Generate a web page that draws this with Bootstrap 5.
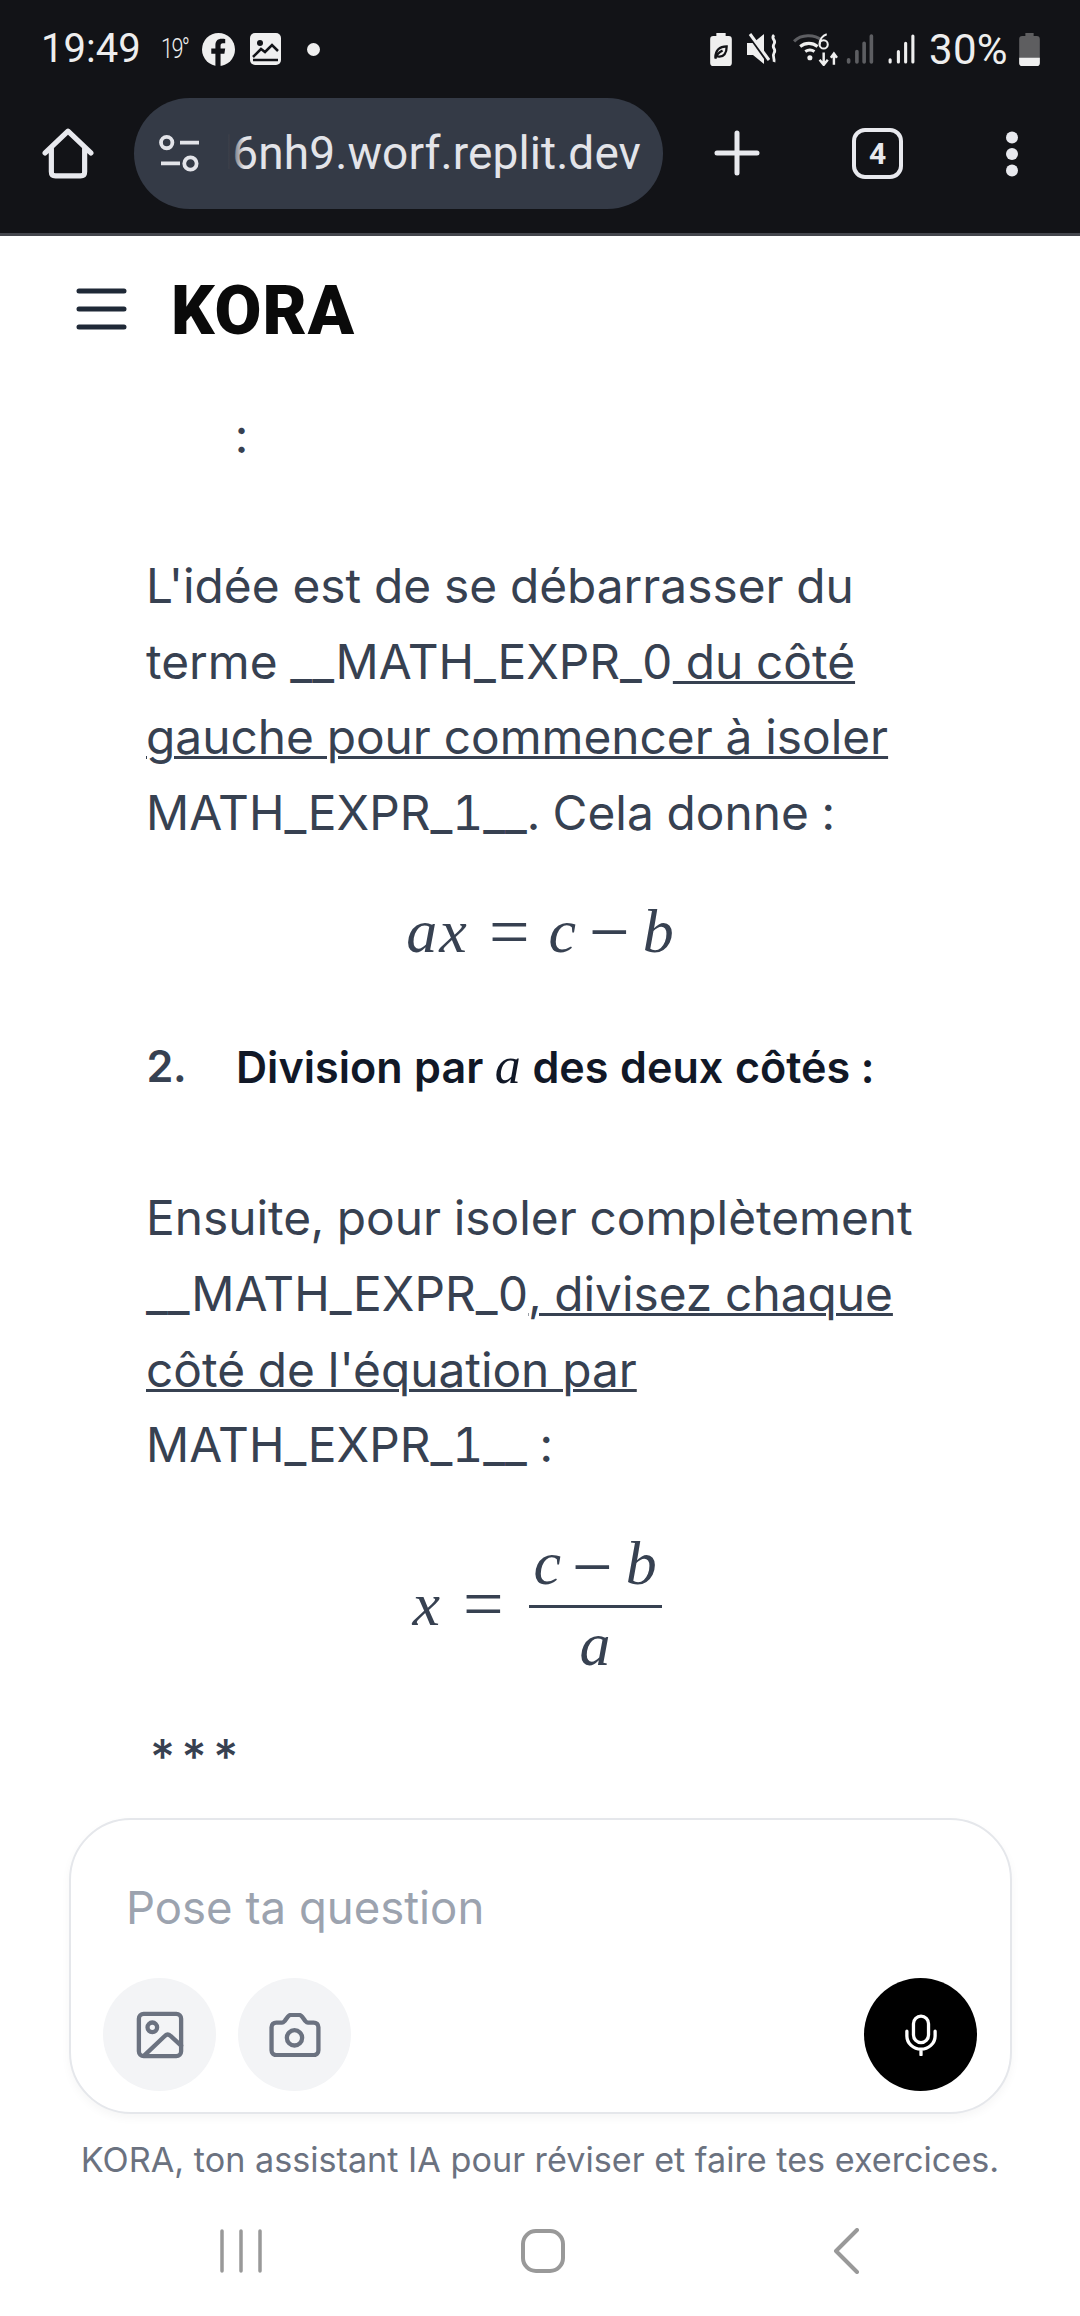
<!doctype html>
<html lang="fr">
<head>
<meta charset="utf-8">
<title>KORA</title>
<link href="https://cdn.jsdelivr.net/npm/bootstrap@5.3.0/dist/css/bootstrap.min.css" rel="stylesheet">
<style>
html,body{height:2316px;overflow:hidden;background:#fff}
body{font-family:Inter,"Noto Sans",sans-serif;color:#374151}
.shell{width:1080px;height:2316px}
.browser{height:236px;background:#121317;border-bottom:3px solid #44464d;color:#e8e9ee;flex:none}
.statusline{height:98px;padding:0 40px 0 41px;font-family:Roboto,sans-serif;font-size:40px;color:#eeeeee}
.clock{font-weight:400;width:97px}
.temp{font-size:27px;font-weight:300;margin-left:23px;letter-spacing:-2px;transform:scaleX(.8);transform-origin:left;width:41px}
.fbic{margin-left:0}
.picic{margin-left:15px}
.dotic{margin-left:26px}
.muteic{margin-left:15px}
.wifiic{margin-left:15px}
.sig1{margin-left:8px}
.sig2{margin-left:14px}
.pct{font-weight:400;font-size:42px;margin-left:14px;width:83px;letter-spacing:.3px;white-space:nowrap}
.battic{margin-left:7px}
.toolline{height:135px}
.homeic{left:42px;top:30px}
.plusic{left:714px;top:32px}
.tabbox{left:852px;top:30px;width:51px;height:51px;border:4.5px solid #e8e9ee;border-radius:13px;font-family:Roboto,sans-serif;font-weight:700;font-size:30px;line-height:1}
.dotsic{left:1005px;top:33px}
.urlchip{position:absolute;left:134px;top:98px;width:529px;height:111px;background:#343a46;border-radius:56px;font-family:Roboto,sans-serif;font-size:46px;color:#e3e4e9;overflow:hidden}
.urltext{position:absolute;right:22px;top:28px;line-height:54px;white-space:nowrap;letter-spacing:.1px}
.urlfade{position:absolute;left:60px;top:0;height:100%;width:50px;background:linear-gradient(90deg,#343a46 68%,rgba(52,58,70,0))}
.tuneic{left:24px;top:36px}
.bar-top{height:150px;padding-left:76px;flex:none}
.menuic{margin-top:-4px}
.brand{font-family:Roboto,sans-serif;font-weight:900;font-size:68px;line-height:1;color:#0a0a0a;margin-left:44px;letter-spacing:1px}
.reading{flex:1 1 auto;overflow:hidden;padding:19px 146px 0 146px;font-size:47.8px;line-height:75.6px;font-variant-numeric:tabular-nums}
.reading p{margin:0}
.reading u{text-decoration-thickness:3px}
.colon{padding-left:89px;height:68px;line-height:62px;margin-bottom:76px!important}
.tex{font-family:"Liberation Serif",serif;font-style:italic;font-size:62px;line-height:1;color:#374151;text-align:center}
.tex1{margin:49px 0 0;height:62px;white-space:nowrap}
.tex .up{font-style:normal;font-size:72px;line-height:50px}
.tex1 .eq{padding:0 19px 0 20px;vertical-align:-4px}
.tex1 .mn{padding:0 13px;vertical-align:-4px}
.tex .gl{letter-spacing:2px}
.heading{display:flex;font-weight:600;margin:72px 0 82px;line-height:64px;font-size:43.1px}
.heading .num{width:90px;color:#374151}
.heading .txt{color:#111827}
.heading i{font-family:"Liberation Serif",serif;font-size:52px;font-weight:400}
.tex2{margin:45px 0 0;height:150px;display:flex;align-items:center;justify-content:center;padding-right:6px}
.tex2 .eq{padding:0 25px 0 15px}
.tex2 .vx{letter-spacing:8px}
.fracbox{display:inline-flex;flex-direction:column;align-items:center}
.fracbox .top{border-bottom:3px solid #374151;padding:0 0 11px;width:133px;text-align:center;white-space:nowrap}
.fracbox .top .mn{padding:0 13px 0 11px;vertical-align:-7px}
.fracbox .bot{padding-top:5px}
.stars{margin-top:40px!important;letter-spacing:.5px;font-size:48px;padding-left:1px;font-weight:500}
.composer-wrap{padding:0 68px 0 69px;flex:none}
.composer{height:296px;border:2px solid #e5e7eb;border-radius:62px;background:#fff;box-shadow:0 4px 10px rgba(0,0,0,.04);padding:0 33px 0 32px}
.prompt{font-size:45.5px;color:#9ca3af;padding:58px 0 0 23px;line-height:60px;height:158px}
.roundbtn{width:113px;height:113px;border-radius:50%;background:#f3f4f6;border:0;padding:0;display:flex;align-items:center;justify-content:center}
.roundbtn.dark{background:#000}
.roundbtn.first{margin-right:22px}
.disclaimer{font-size:34.2px;color:#6b7280;text-align:center;line-height:48px;margin-top:22px;white-space:nowrap;flex:none}
.navbar-sys{height:132px;flex:none}
.nav1{left:220px;top:45px}
.nav2{left:520px;top:44px}
.nav3{left:831px;top:44px}
</style>
</head>
<body>
<div class="shell d-flex flex-column">
  <header class="browser position-relative">
    <div class="statusline d-flex align-items-center">
      <span class="clock">19:49</span>
      <span class="temp">19°</span>
      <svg class="fbic" width="33" height="33" viewBox="0 0 32 32"><circle cx="16" cy="16" r="16" fill="#efefef"/><path d="M13 32V20H9v-5h4v-3.500C13 7.500 15.500 5.500 19 5.500c1.500 0 3 .2 3.500.3V10h-2.300C18.500 10 18 11 18 12.200V15h4.500l-.8 5H18v12z" fill="#121317"/></svg>
      <svg class="picic" width="31" height="32" viewBox="0 0 31 32"><rect width="31" height="32" rx="5" fill="#efefef"/><circle cx="10" cy="10" r="3" fill="#121317"/><path d="M3 24l8-8 4 3 7-7 6 6" fill="none" stroke="#121317" stroke-width="2.500"/><path d="M3 27h25" stroke="#121317" stroke-width="2.500"/></svg>
      <svg class="dotic" width="13" height="13" viewBox="0 0 12 12"><circle cx="6" cy="6" r="6" fill="#efefef"/></svg>
      <div class="ms-auto d-flex align-items-center">
        <svg width="22" height="33" viewBox="0 0 21 32"><path d="M6 0h9v3h3c2 0 3 1 3 3v23c0 2-1 3-3 3H3c-2 0-3-1-3-3V6c0-2 1-3 3-3h3z" fill="#efefef"/><path d="M5 24c0-7 4-11 11-11 0 7-3 10-7 10-1.500 0-2 0-3-1M5 25c1-4 3-6 7-8" fill="none" stroke="#121317" stroke-width="2.200"/></svg>
        <svg class="muteic" width="31" height="32" viewBox="0 0 31 32"><path d="M0 10h6l11-9v30L6 22H0z" fill="#efefef"/><path d="M1 1l20 28" stroke="#121317" stroke-width="3"/><path d="M3 1l19 26" stroke="#efefef" stroke-width="3"/><path d="M27 2c-4 4 3 5 0 9s3 5 0 9c-2 3 1 6 0 9" fill="none" stroke="#efefef" stroke-width="2.800"/></svg>
        <svg class="wifiic" width="45" height="33" viewBox="0 0 44 32"><path d="M1 8c7-7 20-7 27-1" fill="none" stroke="#5d5e62" stroke-width="3"/><path d="M7 13c5-4 12-4 17 0M12 18c3-2 6-2 9 0" fill="none" stroke="#efefef" stroke-width="3"/><circle cx="16.500" cy="24" r="2.500" fill="#efefef"/><path d="M30 19v11m-4-4l4 5 4-5M40 31V21m-3 3l3-4 3 4" fill="none" stroke="#efefef" stroke-width="2.400"/><circle cx="30" cy="11" r="4" fill="none" stroke="#efefef" stroke-width="2"/><path d="M33 1c-4 1-7 5-7 10" fill="none" stroke="#efefef" stroke-width="2"/></svg>
        <svg class="sig1" width="28" height="30" viewBox="0 0 26 29"><g stroke="#5d5e62" stroke-width="3.500" stroke-linecap="round" fill="none"><path d="M2 27v-2M10 27V17M17 27V9M24 27V2"/></g></svg>
        <svg class="sig2" width="27" height="30" viewBox="0 0 26 29"><g stroke="#efefef" stroke-width="3" stroke-linecap="round" fill="none"><path d="M2 27v-2M10 27V17M17 27V9M24 27V2"/></g></svg>
        <span class="pct">30%</span>
        <svg class="battic" width="21" height="33" viewBox="0 0 20 32"><path d="M6 0h8v3h3c2 0 3 1 3 3v23c0 2-1 3-3 3H3c-2 0-3-1-3-3V6c0-2 1-3 3-3h3z" fill="#5e5e60"/><path d="M0 24h20v5c0 2-1 3-3 3H3c-2 0-3-1-3-3z" fill="#efefef"/></svg>
      </div>
    </div>
    <div class="toolline position-relative">
      <svg class="homeic position-absolute" width="52" height="52" viewBox="0 0 50 50"><path d="M3 24L25 3l22 21M9 19v23c0 3 1 4 4 4h24c3 0 4-1 4-4V19" fill="none" stroke="#e8e9ee" stroke-width="5" stroke-linejoin="round" stroke-linecap="round"/></svg>
      <svg class="plusic position-absolute" width="46" height="46" viewBox="0 0 46 46"><path d="M23 3v40M3 23h40" stroke="#e8e9ee" stroke-width="5" stroke-linecap="round"/></svg>
      <div class="tabbox position-absolute d-flex align-items-center justify-content-center">4</div>
      <svg class="dotsic position-absolute" width="14" height="46" viewBox="0 0 14 46"><circle cx="7" cy="6.500" r="6" fill="#e8e9ee"/><circle cx="7" cy="23" r="6" fill="#e8e9ee"/><circle cx="7" cy="39.500" r="6" fill="#e8e9ee"/></svg>
    </div>
    <div class="urlchip">
      <span class="urltext">d6nh9.worf.replit.dev</span>
      <div class="urlfade"></div>
      <svg class="tuneic position-absolute" width="44" height="38" viewBox="0 0 44 40"><circle cx="8" cy="9" r="6" fill="none" stroke="#e3e4e9" stroke-width="4"/><path d="M22 9h20M2 31h20" stroke="#e3e4e9" stroke-width="4"/><circle cx="33" cy="31" r="6.500" fill="none" stroke="#e3e4e9" stroke-width="4"/></svg>
    </div>
  </header>

  <div class="bar-top d-flex align-items-center">
    <svg class="menuic" width="51" height="42" viewBox="0 0 51 42"><path d="M3 3h45M3 21h45M3 39h45" stroke="#1f2937" stroke-width="5" stroke-linecap="round"/></svg>
    <span class="brand">KORA</span>
  </div>

  <main class="reading">
    <p class="colon">:</p>
    <p>L'idée est de se débarrasser du terme __MATH_EXPR_0<u> du côté gauche pour commencer à isoler </u>MATH_EXPR_1__. Cela donne :</p>
    <div class="tex tex1"><span class="gl">ax</span><span class="up eq">=</span>c<span class="up mn">−</span>b</div>
    <div class="heading"><span class="num">2.</span><span class="txt">Division par <i>a</i> des deux côtés :</span></div>
    <p>Ensuite, pour isoler complètement __MATH_EXPR_0<u>, divisez chaque côté de l'équation par </u>MATH_EXPR_1__ :</p>
    <div class="tex tex2"><span class="vx">x</span><span class="up eq">=</span><span class="fracbox"><span class="top">c<span class="up mn">−</span>b</span><span class="bot">a</span></span></div>
    <p class="stars">***</p>
  </main>

  <div class="composer-wrap">
    <div class="composer">
      <div class="prompt">Pose ta question</div>
      <div class="d-flex align-items-center">
        <button class="roundbtn first" type="button" aria-label="Image"><svg width="48" height="48" viewBox="0 0 50 50" fill="none" stroke="#6b7280" stroke-width="4.500" stroke-linecap="round" stroke-linejoin="round"><rect x="3" y="3" width="44" height="44" rx="5"/><circle cx="17" cy="17" r="5"/><path d="M9 46l21-20c2-2 4-2 6 0l11 10"/></svg></button>
        <button class="roundbtn" type="button" aria-label="Photo"><svg width="53" height="44" viewBox="0 0 54 46" fill="none" stroke="#6b7280" stroke-width="4.500" stroke-linecap="round" stroke-linejoin="round"><path d="M8 44c-3 0-5-2-5-5V15c0-3 2-5 5-5h6c1 0 2-1 3-2l3-4c1-1 2-2 3-2h9c1 0 2 1 3 2l3 4c1 1 2 2 3 2h6c3 0 5 2 5 5v24c0 3-2 5-5 5z"/><circle cx="27" cy="26" r="8"/></svg></button>
        <button class="roundbtn dark ms-auto" type="button" aria-label="Micro"><svg width="32" height="42" viewBox="0 0 34 44" fill="none" stroke="#fff" stroke-width="3.500" stroke-linecap="round" stroke-linejoin="round"><rect x="9" y="2" width="16" height="28" rx="8"/><path d="M2 18v5c0 8 7 14 15 14s15-6 15-14v-5M17 37v6"/></svg></button>
      </div>
    </div>
  </div>
  <div class="disclaimer">KORA, ton assistant IA pour réviser et faire tes exercices.</div>
  <nav class="navbar-sys position-relative">
    <svg class="nav1 position-absolute" width="42" height="44" viewBox="0 0 42 44"><path d="M2 2v40M21 2v40M40 2v40" stroke="#999" stroke-width="3.500" stroke-linecap="round"/></svg>
    <svg class="nav2 position-absolute" width="46" height="46" viewBox="0 0 46 46"><rect x="3" y="3" width="40" height="40" rx="13" fill="none" stroke="#999" stroke-width="4"/></svg>
    <svg class="nav3 position-absolute" width="30" height="46" viewBox="0 0 30 46"><path d="M26 2L5 23l21 21" fill="none" stroke="#999" stroke-width="4" stroke-linecap="round" stroke-linejoin="round"/></svg>
  </nav>
</div>
<script src="https://cdn.jsdelivr.net/npm/bootstrap@5.3.0/dist/js/bootstrap.bundle.min.js"></script>
</body>
</html>
